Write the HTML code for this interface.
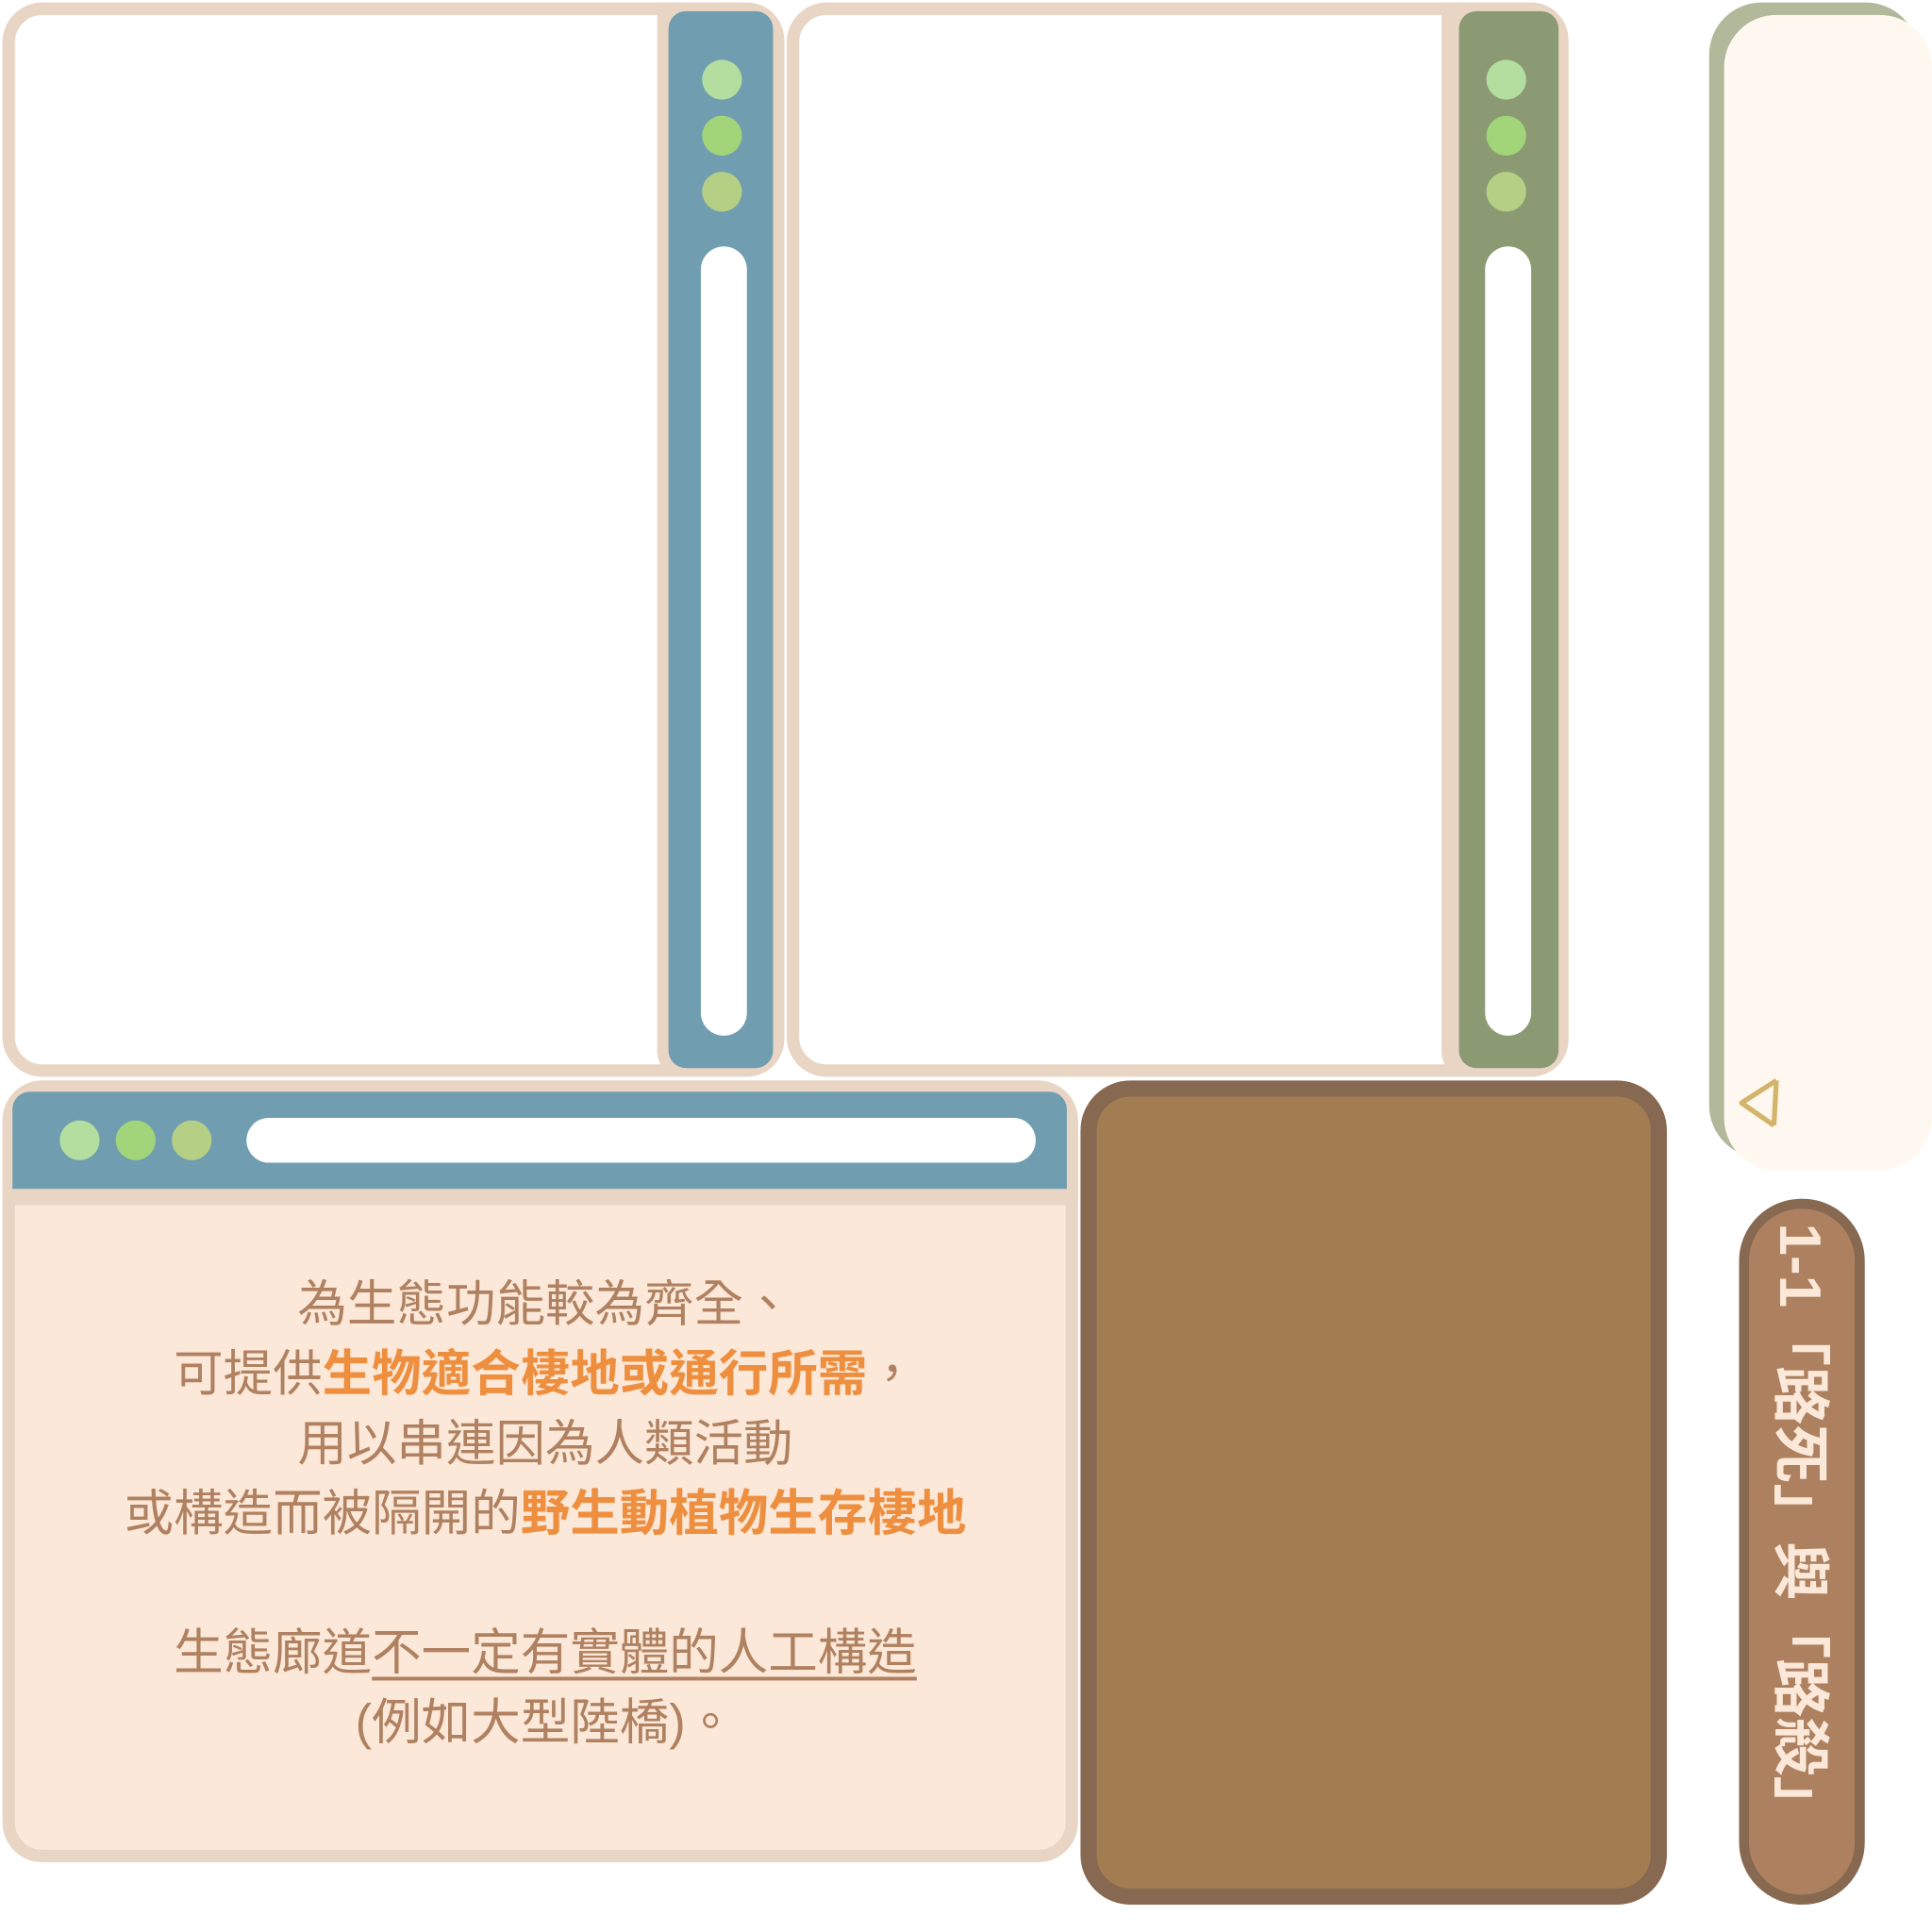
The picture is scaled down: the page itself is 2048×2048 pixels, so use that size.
<!DOCTYPE html>
<html><head><meta charset="utf-8"><style>
html,body{margin:0;padding:0;background:#fff;width:2048px;height:2048px;overflow:hidden}
#w{position:absolute;left:0;top:0;width:1552px;height:1552px;transform:scale(1.31959);transform-origin:0 0}
.a{position:absolute;box-sizing:border-box}
.dot{position:absolute;width:32px;height:32px;border-radius:50%}
.txt{font-family:"Liberation Sans","Noto Sans CJK TC",sans-serif;color:#b08160;font-size:39.8px;text-align:center;line-height:56px}
.o{color:#ee8f40;font-weight:bold}
</style></head><body><div id="w">
<div class="a" style="left:2px;top:2px;width:628px;height:863px;border:10px solid #e8d5c4;border-radius:32px;background:#fff"></div>
<div class="a" style="left:528px;top:2px;width:102px;height:863px;background:#e8d5c4;border-radius:0 30px 30px 20px"></div>
<div class="a" style="left:537px;top:9px;width:84px;height:849px;background:#709eb0;border-radius:14px"></div>
<div class="dot" style="left:564px;top:48px;background:#b3dea0"></div>
<div class="dot" style="left:564px;top:93px;background:#a2d47a"></div>
<div class="dot" style="left:564px;top:138px;background:#b5cf85"></div>
<div class="a" style="left:563px;top:198px;width:37px;height:634px;background:#fff;border-radius:19px"></div>
<div class="a" style="left:632px;top:2px;width:628px;height:863px;border:10px solid #e8d5c4;border-radius:32px;background:#fff"></div>
<div class="a" style="left:1158px;top:2px;width:102px;height:863px;background:#e8d5c4;border-radius:0 30px 30px 20px"></div>
<div class="a" style="left:1172px;top:9px;width:80px;height:849px;background:#8c9a73;border-radius:14px"></div>
<div class="dot" style="left:1194px;top:48px;background:#b3dea0"></div>
<div class="dot" style="left:1194px;top:93px;background:#a2d47a"></div>
<div class="dot" style="left:1194px;top:138px;background:#b5cf85"></div>
<div class="a" style="left:1193px;top:198px;width:37px;height:634px;background:#fff;border-radius:19px"></div>
<div class="a" style="left:1373px;top:2px;width:168px;height:928px;background:#b2b89a;border-radius:42px"></div>
<div class="a" style="left:1385px;top:12px;width:167px;height:928px;background:#fff8f1;border-radius:42px"></div>
<svg class="a" style="left:1395px;top:864px" width="40" height="44"><path d="M32 4 L4 22 L30 40" fill="none" stroke="#d4b46a" stroke-width="4" stroke-linejoin="round"/><path d="M32 4 L30 40" stroke="#d4b46a" stroke-width="4"/></svg>
<div class="a" style="left:1397px;top:963px;width:101px;height:567px;background:#ad8160;border:8px solid #876850;border-radius:50px"></div>
<div class="a" style="left:1446px;top:1228px;width:0;height:0">
<div style="position:absolute;left:-300px;top:-28px;width:600px;height:56px;transform:rotate(90deg);font-family:'Liberation Sans','Noto Sans CJK TC',sans-serif;font-weight:bold;font-size:47px;color:#fbe8d9;text-align:center;line-height:56px;white-space:nowrap">1-1「路死」與「路殺」</div></div>
<div class="a" style="left:868px;top:868px;width:471px;height:662px;background:#a37d52;border:13px solid #876850;border-radius:40px"></div>
<div class="a" style="left:2px;top:868px;width:864px;height:628px;background:#fbe8d9;border:10px solid #e8d5c4;border-radius:32px"></div>
<div class="a" style="left:2px;top:868px;width:864px;height:100px;background:#e8d5c4;border-radius:32px 32px 0 0"></div>
<div class="a" style="left:10px;top:877px;width:847px;height:78px;background:#709eb0;border-radius:14px 14px 0 0"></div>
<div class="dot" style="left:48px;top:900px;background:#b3dea0"></div>
<div class="dot" style="left:93px;top:900px;background:#a2d47a"></div>
<div class="dot" style="left:138px;top:900px;background:#b5cf85"></div>
<div class="a" style="left:198px;top:898px;width:634px;height:36px;background:#fff;border-radius:18px"></div>
<div class="a txt" style="left:10px;top:1020px;width:856px">
為生態功能較為齊全、<br>可提供<span class="o">生物適合棲地或通行所需</span>，<br>用以串連因為人類活動<br>或構造而被隔開的<span class="o">野生動植物生存棲地</span><br><br>生態廊道<span style="text-decoration:underline;text-decoration-thickness:3px;text-underline-offset:6px">不一定有實體的人工構造</span><br>(例如大型陸橋)。
</div>
</div></body></html>
